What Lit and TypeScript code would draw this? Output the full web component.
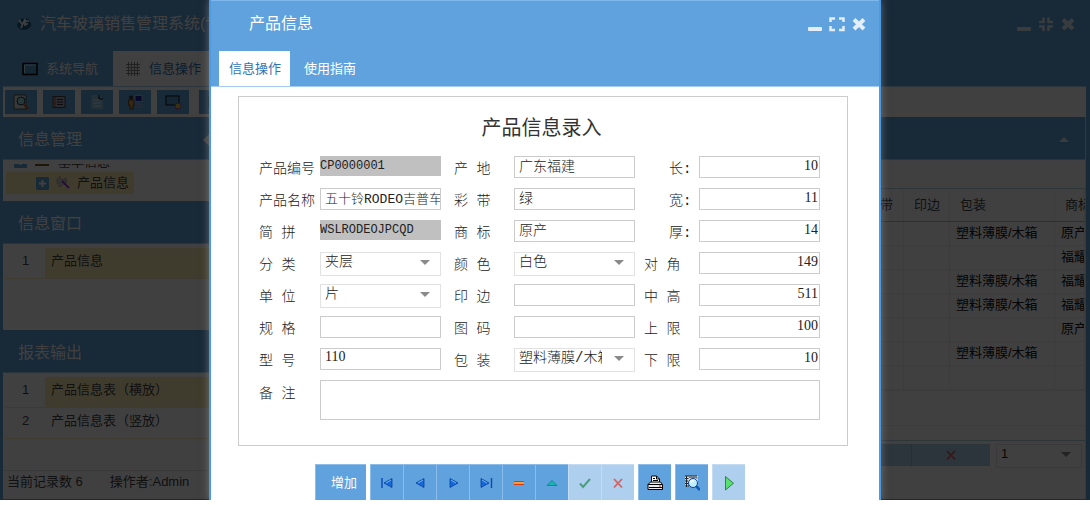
import { LitElement, html, css, svg, nothing } from "lit";
import { customElement } from "lit/decorators.js";
import { classMap } from "lit/directives/class-map.js";

type Field = {
  id: string;
  label: string;
  value?: string;
  kind?: "text" | "locked" | "select" | "number";
  inset?: boolean;
  mixed?: boolean;
};

const ROWS: Field[][] = [
  [
    { id: "code", label: "产品编号", value: "CP0000001", kind: "locked" },
    { id: "origin", label: "产 地", value: "广东福建" },
    { id: "length", label: "长:", value: "10", kind: "number", inset: true },
  ],
  [
    { id: "name", label: "产品名称", value: "五十铃RODEO吉普车前挡", mixed: true },
    { id: "band", label: "彩 带", value: "绿" },
    { id: "width", label: "宽:", value: "11", kind: "number", inset: true },
  ],
  [
    { id: "pinyin", label: "简 拼", value: "WSLRODEOJPCQD", kind: "locked" },
    { id: "brand", label: "商 标", value: "原产" },
    { id: "thick", label: "厚:", value: "14", kind: "number", inset: true },
  ],
  [
    { id: "class", label: "分 类", value: "夹层", kind: "select" },
    { id: "color", label: "颜 色", value: "白色", kind: "select" },
    { id: "diagonal", label: "对 角", value: "149", kind: "number" },
  ],
  [
    { id: "unit", label: "单 位", value: "片", kind: "select" },
    { id: "edge", label: "印 边" },
    { id: "midheight", label: "中 高", value: "511", kind: "number" },
  ],
  [
    { id: "spec", label: "规 格" },
    { id: "drawing", label: "图 码" },
    { id: "upper", label: "上 限", value: "100", kind: "number" },
  ],
  [
    { id: "model", label: "型 号", value: "110" },
    { id: "packing", label: "包 装", value: "塑料薄膜/木箱", kind: "select" },
    { id: "lower", label: "下 限", value: "10", kind: "number" },
  ],
];

const RECORDS = [
  ["塑料薄膜/木箱", "原产"],
  ["", "福耀"],
  ["塑料薄膜/木箱", "福耀"],
  ["塑料薄膜/木箱", "福耀"],
  ["", "原产"],
  ["塑料薄膜/木箱", ""],
  ["", ""],
];

const icon = (body: unknown, w = 16, h = 16) =>
  html`<svg width=${w} height=${h} viewBox="0 0 ${w} ${h}" aria-hidden="true">${body}</svg>`;

const ICONS = {
  min: svg`<rect x="1" y="11" width="14" height="4" rx="1" fill="currentColor"/>`,
  expand: svg`<path d="M1.5 6V2.5H6M10 2.5H14.500V6M14.500 10V14H10M6 14H1.500V10" fill="none" stroke="currentColor" stroke-width="2.500"/>`,
  shrink: svg`<path d="M1 6H5.500V1.500M10.500 1.500V6H15M15 10.500H10.500V15M5.500 15V10.500H1" fill="none" stroke="currentColor" stroke-width="2.500"/>`,
  close: svg`<path d="M3 3.500L13 13M13 3.500L3 13" stroke="currentColor" stroke-width="4"/>`,
  first: svg`<path d="M3 3V13" stroke="#0b47b5" stroke-width="1.400"/><path d="M13 3.500V12.500L5 8Z" fill="#1768d8" stroke="#0b3f9f" stroke-width=".8"/><path d="M12 5L7 8" stroke="#6bb8ff"/>`,
  prev: svg`<path d="M12 3.500V12.500L4 8Z" fill="#1768d8" stroke="#0b3f9f" stroke-width=".8"/><path d="M11 5L6 8" stroke="#6bb8ff"/>`,
  next: svg`<path d="M5 3.500V12.500L13 8Z" fill="#1768d8" stroke="#0b3f9f" stroke-width=".8"/><path d="M6 5L11 8" stroke="#6bb8ff"/>`,
  last: svg`<path d="M13.500 3V13" stroke="#0b47b5" stroke-width="1.400"/><path d="M3 3.500V12.500L11 8Z" fill="#1768d8" stroke="#0b3f9f" stroke-width=".8"/><path d="M4 5L9 8" stroke="#6bb8ff"/>`,
  minus: svg`<rect x="3" y="6.500" width="10" height="3" fill="#ff9a3c"/><path d="M3 6.500H13M3 9.500H13" stroke="#d83a10"/>`,
  up: svg`<path d="M3 10.500L8 5.500L13 10.500Z" fill="#18b3b3" stroke="#08807f" stroke-width=".8"/>`,
  check: svg`<path d="M3 8.500L6 12L13 4" fill="none" stroke="#4b9f7d" stroke-width="2"/>`,
  cross: svg`<path d="M4 4L12 12.500M12 4L4 12.500" fill="none" stroke="#d5605f" stroke-width="1.800"/>`,
  print: svg`<path d="M4.500 7V1H9.500L12.500 4V7" fill="#fff" stroke="#000"/><path d="M9.500 1V4H12.500M6 3.500H8M6 5.500H11" fill="none" stroke="#000"/><path d="M1 9.500L3.500 7H13.500L15.500 9.500V14.500H1Z" fill="#e8eaee" stroke="#000"/><path d="M1 9.500H15.500M2 12.500H15" stroke="#000"/><rect x="12" y="10.500" width="2" height="1" fill="#e02020"/>`,
  preview: svg`<path d="M1 1H14V8H4V12H1Z" fill="#cfdbe6"/><path d="M1 1H13M1 3.500H4.500M1 6H4M1 8.500H4M1 11H5M2.500 1V12" stroke="#222"/><path d="M5 2.500H13V4" stroke="#777" fill="none"/><circle cx="9" cy="8" r="4.500" fill="#bdefff" stroke="#123e88"/><path d="M7 8Q7 5.500 10 5.500" fill="none" stroke="#fff" stroke-width="1.500"/><path d="M12 11L16 15" stroke="#0b5ab5" stroke-width="2.500"/>`,
  play: svg`<path d="M4.500 1.500V15L12.500 8.200Z" fill="#55e070" stroke="#3d7b52"/>`,
  caret: svg`<path d="M0 0H10L5 5Z" fill="currentColor"/>`,
  logo: svg`<path d="M3 6Q5 1 9 3Q13 1 14 6Q17 9 13 12Q8 16 3 12Q-1 9 3 6Z" fill="#1d5f88"/><path d="M3 4L6 8M9 3L5 12M9 10V5H13M9 8H12" stroke="#fff" stroke-width="1.600" fill="none"/>`,
  screen: svg`<rect x="1" y="2.500" width="14" height="11" fill="#4f97c8" stroke="#000" stroke-width="1.500"/><path d="M2.500 12V4H14" stroke="#cbe9ff" fill="none"/>`,
  grid: svg`<path d="M3.500 1V15M6.500 1V15M9.500 1V15M12.500 1V15M1 3.500H15M1 6.500H15M1 9.500H15M1 12.500H15" stroke="#888"/>`,
  find: svg`<path d="M1 1H13V15H1Z" fill="#ddd" stroke="#554"/><circle cx="8" cy="7" r="4" fill="#9fe0e8" stroke="#234"/><path d="M11 10L15 15" stroke="#c26a28" stroke-width="2.500"/>`,
  list: svg`<rect x="2" y="2.500" width="12" height="11" fill="#aab" stroke="#444"/><path d="M6 5.500H12M6 8H12M6 10.500H12" stroke="#333"/><path d="M4 3V13" stroke="#a65" stroke-width="1.500"/>`,
  doc: svg`<path d="M2 1H10L14 5V15H2Z" fill="#8dbfdc"/><path d="M10 1V5H14" fill="none" stroke="#000"/><path d="M4 6H11M4 9H12M4 12H12" stroke="#d7efff"/>`,
  user: svg`<circle cx="4" cy="3.500" r="2" fill="#432"/><path d="M1.500 6H7V11H6V15H3V11H1.500Z" fill="#e0a040" stroke="#543"/><rect x="8" y="1.500" width="7" height="6" fill="#2222a0" stroke="#bbb"/><path d="M8 10H15L14 13H8" fill="none" stroke="#aac"/>`,
  monitor: svg`<rect x="1" y="2" width="13" height="9" fill="#4f97c8" stroke="#111"/><circle cx="13" cy="12" r="3" fill="#d3c63a" stroke="#a349a4"/>`,
  plus: svg`<rect width="13" height="13" rx="1" fill="#5fa2dd"/><path d="M6.500 3V10M3 6.500H10" stroke="#fff" stroke-width="2"/>`,
  tool: svg`<path d="M2 4L5 1L6 5L11 3L12 7L8 9L5 12L2 8Z" fill="#ccc" stroke="#999" stroke-dasharray="2 1"/><path d="M7 6L14 13" stroke="#9a3ad0" stroke-width="2"/>`,
};

@customElement("app-root")
export class AppRoot extends LitElement {
  static styles = css`
    :host {
      display: block;
      font-family: "Liberation Sans", "Noto Sans CJK SC", sans-serif;
      font-size: 13px;
      line-height: 20px;
      color: #444;
      background: #fff;
    }
    * { box-sizing: border-box; }
    svg { display: block; flex: none; }
    button, input, select, textarea {
      font: inherit; color: inherit; margin: 0; padding: 0; border: 0; border-radius: 0;
    }
    a { color: inherit; text-decoration: none; }
    .page { position: relative; height: calc(100vh - 5px); min-height: 500px; overflow: hidden; }
    .app { height: 100%; display: flex; flex-direction: column; border: solid #5fa2dd; border-width: 0 4px 1px 3px; }
    .head { background: #5fa2dd; color: #fff; border-bottom: 1px solid #a5cdf0; flex: none; }
    .titlebar { display: flex; align-items: center; height: 51px; padding: 0 10px 4px 13px; gap: 8px; }
    .titlebar h1 { margin: 0; font-size: 16px; font-weight: 400; line-height: 24px; white-space: nowrap; }
    .winbtns { margin-left: auto; display: flex; gap: 6px; }
    .winbtns button { background: none; color: #e4eefa; }
    .tabs { display: flex; height: 35px; }
    .tab { display: flex; align-items: center; gap: 8px; padding: 0 15px 0 19px; }
    .tab.on { background: #fff; color: #2f74b3; padding: 0 12px; }
    .tools { display: flex; gap: 6px; height: 30px; padding: 3px 2px; flex: none; }
    .tools button { width: 32px; height: 24px; background: #5fa2dd; display: grid; place-items: center; }
    .tools .apart { margin-left: 4px; }
    .cols { display: flex; flex: 1; min-height: 0; }
    .side { width: 212px; flex: none; display: flex; flex-direction: column; }
    .bar { height: 43px; flex: none; background: #5fa2dd; color: #fff; display: flex; align-items: center; justify-content: space-between; padding: 3px 6px 0 15px; border-bottom: 1px solid #a5cdf0; }
    .bar h2 { margin: 0; font-size: 16px; font-weight: 400; line-height: 24px; }
    .main .bar { padding-right: 16px; }
    .tree { height: 41px; flex: none; display: flex; flex-direction: column; justify-content: flex-end; padding: 0 0 7px 3px; }
    .parent { display: flex; gap: 8px; padding-left: 8px; align-items: flex-end; height: 4px; margin-bottom: 4px; overflow: hidden; flex: none; line-height: 12px; }
    .leaf { display: flex; align-items: center; gap: 6px; width: 128px; height: 22px; padding-left: 30px; background: #ffeeb5; flex: none; }
    .list { padding: 4px 0 0 3px; flex: none; }
    .list.mid { height: 86px; }
    .list.end { flex: 1; }
    .item { display: flex; height: 31px; border-bottom: 1px solid #f5e8bd; }
    .item.sel { background: #ffeeb5; }
    .item span { width: 39px; text-align: center; background: #fff; padding-top: 2px; line-height: 22px; }
    .item a { padding: 2px 6px; line-height: 22px; }
    .status { display: flex; gap: 27px; height: 29px; padding: 1px 4px; border-top: 1px solid #e4e4e4; flex: none; }
    .main { flex: 1; min-width: 0; display: flex; flex-direction: column; border-right: 1px solid #cfe3f5; }
    .sheet { height: 237px; margin-top: 28px; border-top: 1px solid #b8d4e4; overflow: hidden; flex: none; }
    table { width: 100%; table-layout: fixed; border-collapse: collapse; }
    th { height: 32px; font-weight: 400; text-align: left; padding: 0 10px; border-bottom: 1px solid #bbb; border-right: 1px solid #eee; white-space: nowrap; }
    th.first { text-align: right; }
    td { height: 24px; padding: 0 0 0 6px; color: #111; white-space: nowrap; border: 1px solid #f0f0f0; line-height: 20px; overflow: hidden; }
    .c2 { width: 46px; } .c3 { width: 105px; } .c4 { width: 30px; }
    .grow { height: 15px; border-top: 1px solid #eee; }
    .pager { display: flex; justify-content: flex-end; gap: 6px; padding: 3px 3px 0 0; border-top: 1px solid #b8d4e4; }
    .pager .wide { width: 79px; height: 22px; background: #aecfee; display: grid; place-items: center; border-left: 1px solid #8fbde8; }
    .pager .rest { flex: 1; height: 22px; background: #aecfee; }
    .pager .acts { flex: 1; display: flex; }
    .pager .pick { width: 86px; height: 24px; }
    .overlay { position: absolute; inset: 0; background: rgba(0, 0, 0, 0.75); display: flex; justify-content: center; }
    .modal { width: 672px; max-width: 100%; display: flex; flex-direction: column; background: #fff; border: solid #4a9be4; border-width: 0 2px; box-shadow: 0 0 8px rgba(150, 150, 150, 0.6); }
    .modal .titlebar { padding: 0 12px 4px 38px; border-top: 1px solid #7db8ee; }
    .modal .tabs { padding-left: 8px; }
    .modal .tab { padding: 0 14px; }
    .modal .tab.on { padding: 0 9px 0 10px; }
    .card { margin: 9px 31px 0 27px; padding: 18px 27px 25px 20px; border: 1px solid #ccc; color: #222; }
    .card h2 { margin: 0; font-size: 20px; font-weight: 400; line-height: 26px; padding: 0 0 15px 4px; text-align: center; color: #333; }
    .form { display: grid; grid-template-columns: 61px minmax(0, 1fr) 73px minmax(0, 1fr) 64px minmax(0, 1fr); font-family: "Liberation Mono", "Noto Sans CJK SC", monospace; font-size: 14px; font-weight: 300; }
    .form label { height: 32px; line-height: 26px; white-space: nowrap; }
    .form .mid { padding-left: 13px; }
    .form .right { padding-left: 9px; }
    .form .inset { padding-left: 34px; }
    .form input { width: 100%; height: 22px; padding: 0 0 4px 4px; border: 1px solid #ccc; background: #fff; line-height: 18px; }
    .form .locked { height: 20px; padding: 0; background: #c0c0c0; border: 0; font-size: 12px; }
    .form .mixed { font-size: 13px; }
    .form .number { font-family: "Liberation Serif", serif; font-weight: 400; text-align: right; padding: 0 1px 3px; }
    .form .plain { font-family: "Liberation Serif", "Noto Sans CJK SC", serif; }
    .pick { position: relative; height: 24px; color: #222; }
    .pick select { width: 100%; height: 24px; appearance: none; background: #fff; border: 1px solid #e2e2e2; padding: 0 32px 4px 4px; line-height: 18px; }
    .pick svg { position: absolute; right: 11px; top: 8px; color: #8a8a8a; pointer-events: none; }
    .form textarea { grid-column: 2 / -1; height: 40px; border: 1px solid #ccc; resize: none; background: #fff; }
    .form .note { height: 40px; line-height: 28px; }
    .actions { display: flex; justify-content: center; gap: 4px; margin-top: auto; padding-right: 31px; }
    .group { display: flex; }
    .actions button { width: 33px; height: 36px; display: grid; place-items: center; background: #5fa2dd; color: #fff; border: solid #8cbdea; border-width: 1px 0 0 1px; }
    .actions .add { width: 51px; padding-left: 7px; }
    .actions .off { background: #aecfee; border-color: #c3dcf4; }
  `;

  private field(f: Field, col: number) {
    const kind = f.kind ?? "text";
    const cls = classMap({ mid: col === 1, right: col === 2 && !f.inset, inset: !!f.inset });
    return html`
      <label for=${f.id} class=${cls}>${f.label}</label>
      ${kind === "select"
        ? html`<div class="pick"><select id=${f.id}><option>${f.value}</option></select>${icon(ICONS.caret, 10, 6)}</div>`
        : html`<input id=${f.id} .value=${f.value ?? ""} ?readonly=${kind === "locked"}
            class=${classMap({ locked: kind === "locked", number: kind === "number", plain: kind === "text" && !f.mixed, mixed: !!f.mixed })} />`}
    `;
  }

  private act(name: keyof typeof ICONS, label: string, off = false) {
    return html`<button class=${off ? "off" : nothing} aria-label=${label}>${icon(ICONS[name])}</button>`;
  }

  private winButtons(size: "expand" | "shrink") {
    return html`<div class="winbtns">
      <button aria-label="最小化">${icon(ICONS.min)}</button>
      <button aria-label="缩放">${icon(ICONS[size])}</button>
      <button aria-label="关闭">${icon(ICONS.close)}</button>
    </div>`;
  }

  private background() {
    return html`<div class="app" inert>
      <header class="head">
        <div class="titlebar">${icon(ICONS.logo)}<h1>汽车玻璃销售管理系统(专业版)</h1>${this.winButtons("shrink")}</div>
        <nav class="tabs">
          <a class="tab" href="#nav">${icon(ICONS.screen)}系统导航</a>
          <a class="tab on" href="#info">${icon(ICONS.grid)}信息操作</a>
        </nav>
      </header>
      <div class="tools">
        ${(["find", "list", "doc", "user", "monitor"] as const).map((n) => html`<button aria-label=${n}>${icon(ICONS[n])}</button>`)}
        <button class="apart" aria-label="more">${icon(ICONS.list)}</button>
      </div>
      <div class="cols">
        <aside class="side">
          <div class="bar"><h2>信息管理</h2>${icon(svg`<path d="M6 0V12L0 6Z" fill="#fff"/>`, 6, 12)}</div>
          <div class="tree">
            <div class="parent">${icon(ICONS.plus, 13, 13)}${icon(svg`<rect y="8" width="14" height="3" fill="#765c28"/>`, 15, 13)}<span>基本信息</span></div>
            <div class="leaf">${icon(ICONS.plus, 13, 13)}${icon(ICONS.tool)}<span>产品信息</span></div>
          </div>
          <div class="bar"><h2>信息窗口</h2></div>
          <div class="list mid"><div class="item sel"><span>1</span><a href="#p">产品信息</a></div></div>
          <div class="bar"><h2>报表输出</h2></div>
          <div class="list end">
            <div class="item sel"><span>1</span><a href="#h">产品信息表（横放）</a></div>
            <div class="item"><span>2</span><a href="#v">产品信息表（竖放）</a></div>
          </div>
          <div class="status"><span>当前记录数 6</span><span>操作者:Admin</span></div>
        </aside>
        <section class="main">
          <div class="bar"><span></span>${icon(svg`<path d="M0 5L5 0L10 5Z" fill="#e4eefa"/>`, 10, 5)}</div>
          <div class="sheet">
            <table>
              <thead><tr><th class="first">彩带</th><th class="c2">印边</th><th class="c3">包装</th><th class="c4">商标</th></tr></thead>
              <tbody>${RECORDS.map(([pack, brand]) => html`<tr><td></td><td></td><td>${pack}</td><td>${brand}</td></tr>`)}</tbody>
            </table>
            <div class="grow"></div>
          </div>
          <div class="grow"></div>
          <div class="pager">
            <div class="acts"><div class="rest"></div><button class="wide" aria-label="取消">${icon(ICONS.cross)}</button></div>
            <div class="pick"><select aria-label="页码"><option>1</option></select>${icon(ICONS.caret, 10, 6)}</div>
          </div>
        </section>
      </div>
    </div>`;
  }

  render() {
    return html`<div class="page">
      ${this.background()}
      <div class="overlay">
        <section class="modal" role="dialog" aria-label="产品信息">
          <header class="head">
            <div class="titlebar"><h1>产品信息</h1>${this.winButtons("expand")}</div>
            <nav class="tabs">
              <a class="tab on" href="#entry">信息操作</a>
              <a class="tab" href="#guide">使用指南</a>
            </nav>
          </header>
          <div class="card">
            <h2>产品信息录入</h2>
            <form class="form">
              ${ROWS.map((row) => row.map((f, i) => this.field(f, i)))}
              <label class="note" for="note">备 注</label>
              <textarea id="note"></textarea>
            </form>
          </div>
          <div class="actions">
            <button class="add">增加</button>
            <div class="group">
              ${this.act("first", "首条")}${this.act("prev", "上一条")}${this.act("next", "下一条")}${this.act("last", "末条")}
              ${this.act("minus", "删除")}${this.act("up", "编辑")}${this.act("check", "保存", true)}${this.act("cross", "取消", true)}
            </div>
            ${this.act("print", "打印")}${this.act("preview", "预览")}${this.act("play", "执行", true)}
          </div>
        </section>
      </div>
    </div>`;
  }
}
